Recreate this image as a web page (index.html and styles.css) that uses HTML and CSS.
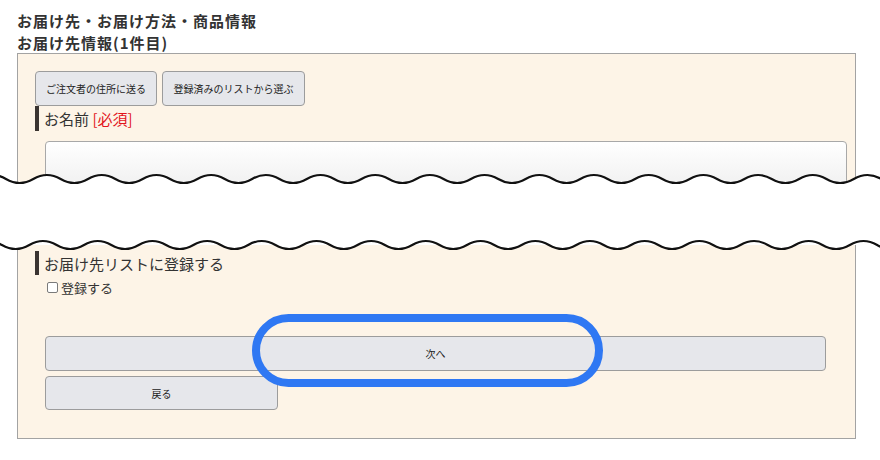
FILE: index.html
```html
<!DOCTYPE html>
<html lang="ja">
<head>
<meta charset="utf-8">
<title>お届け先情報</title>
<link rel="stylesheet" href="styles.css">
</head>
<body>
<div class="page-title">
  <div>お届け先・お届け方法・商品情報</div>
  <div>お届け先情報(1件目)</div>
</div>
<div class="panel">
  <div class="btn-row">
    <button class="btn btn-orderer">ご注文者の住所に送る</button>
    <button class="btn btn-list">登録済みのリストから選ぶ</button>
  </div>
  <div class="field-label">お名前&nbsp;<span class="required">[必須]</span></div>
  <input class="text-input" type="text">
  <div class="field-label field-label-low">お届け先リストに登録する</div>
  <label class="check-row"><input class="check" type="checkbox">登録する</label>
  <div class="next-wrap">
    <button class="btn btn-next">次へ</button>
    <div class="highlight"></div>
  </div>
  <button class="btn btn-back">戻る</button>
</div>
<svg class="cut" width="880" height="460" viewBox="0 0 880 460" aria-hidden="true">
  <path fill="#ffffff" d="M-21.4,179 q13.675,-8 27.35,0 t27.35,0 t27.35,0 t27.35,0 t27.35,0 t27.35,0 t27.35,0 t27.35,0 t27.35,0 t27.35,0 t27.35,0 t27.35,0 t27.35,0 t27.35,0 t27.35,0 t27.35,0 t27.35,0 t27.35,0 t27.35,0 t27.35,0 t27.35,0 t27.35,0 t27.35,0 t27.35,0 t27.35,0 t27.35,0 t27.35,0 t27.35,0 t27.35,0 t27.35,0 t27.35,0 t27.35,0 t27.35,0 t27.35,0 L920,245 L-21.4,245 Z"/>
  <path fill="#ffffff" d="M-25.4,245 q13.675,-8 27.35,0 t27.35,0 t27.35,0 t27.35,0 t27.35,0 t27.35,0 t27.35,0 t27.35,0 t27.35,0 t27.35,0 t27.35,0 t27.35,0 t27.35,0 t27.35,0 t27.35,0 t27.35,0 t27.35,0 t27.35,0 t27.35,0 t27.35,0 t27.35,0 t27.35,0 t27.35,0 t27.35,0 t27.35,0 t27.35,0 t27.35,0 t27.35,0 t27.35,0 t27.35,0 t27.35,0 t27.35,0 t27.35,0 t27.35,0 L920,210 L-25.4,210 Z"/>
  <path fill="none" stroke="#111111" stroke-width="2.2" d="M-21.4,179 q13.675,-8 27.35,0 t27.35,0 t27.35,0 t27.35,0 t27.35,0 t27.35,0 t27.35,0 t27.35,0 t27.35,0 t27.35,0 t27.35,0 t27.35,0 t27.35,0 t27.35,0 t27.35,0 t27.35,0 t27.35,0 t27.35,0 t27.35,0 t27.35,0 t27.35,0 t27.35,0 t27.35,0 t27.35,0 t27.35,0 t27.35,0 t27.35,0 t27.35,0 t27.35,0 t27.35,0 t27.35,0 t27.35,0 t27.35,0 t27.35,0"/>
  <path fill="none" stroke="#111111" stroke-width="2.2" d="M-25.4,245 q13.675,-8 27.35,0 t27.35,0 t27.35,0 t27.35,0 t27.35,0 t27.35,0 t27.35,0 t27.35,0 t27.35,0 t27.35,0 t27.35,0 t27.35,0 t27.35,0 t27.35,0 t27.35,0 t27.35,0 t27.35,0 t27.35,0 t27.35,0 t27.35,0 t27.35,0 t27.35,0 t27.35,0 t27.35,0 t27.35,0 t27.35,0 t27.35,0 t27.35,0 t27.35,0 t27.35,0 t27.35,0 t27.35,0 t27.35,0 t27.35,0"/>
</svg>
</body>
</html>
```

FILE: styles.css
```css
* { box-sizing: border-box; }

body {
  margin: 0;
  background: #ffffff;
  color: #333333;
  font-family: "Noto Sans CJK JP", "Noto Sans", sans-serif;
}

.page-title {
  padding: 10px 0 0 17px;
  font-size: 15px;
  font-weight: bold;
  letter-spacing: 1px;
  line-height: 22px;
  color: #333333;
}

.panel {
  width: 839px;
  height: 386px;
  margin: -1px 0 0 17px;
  padding: 17px 0 0 17px;
  border: 1px solid #a3a3a3;
  background: #fdf4e7;
}

.btn {
  display: flex;
  align-items: center;
  justify-content: center;
  height: 35px;
  padding: 0;
  border: 1px solid #9c9c9c;
  border-radius: 4px;
  background: #e6e7eb;
  color: #222222;
  font-family: inherit;
  font-size: 10px;
}

.btn-row {
  display: flex;
  gap: 5px;
}

.btn-orderer { width: 122px; }
.btn-list { width: 143px; }

.field-label {
  display: flex;
  align-items: center;
  height: 25px;
  padding-left: 5px;
  border-left: 4px solid #3a3431;
  font-size: 15px;
  color: #333333;
}

.required { color: #e2141c; }

.text-input {
  display: block;
  width: 802px;
  height: 60px;
  margin: 10px 0 0 10px;
  border: 1px solid #a8a8a8;
  border-radius: 4px;
  background: linear-gradient(#ffffff, #ececec);
}

.field-label-low {
  height: 24px;
  margin-top: 50px;
}

.check-row {
  display: flex;
  align-items: center;
  height: 22px;
  margin: 1px 0 0 12px;
  font-size: 13px;
  color: #333333;
}

.check {
  appearance: none;
  width: 11px;
  height: 11px;
  margin: 0 3px 0 0;
  border: 1px solid #7a7a7a;
  border-radius: 2px;
  background: #ffffff;
}

.next-wrap {
  position: relative;
  width: 781px;
  margin: 38px 0 0 10px;
}

.btn-next { width: 781px; }

.highlight {
  position: absolute;
  left: 207px;
  top: -22px;
  width: 351px;
  height: 73px;
  border: 8px solid #2f78f3;
  border-radius: 37px;
}

.btn-back {
  width: 233px;
  height: 34px;
  margin: 5px 0 0 10px;
}

.cut {
  position: absolute;
  left: 0;
  top: 0;
  pointer-events: none;
}
```
